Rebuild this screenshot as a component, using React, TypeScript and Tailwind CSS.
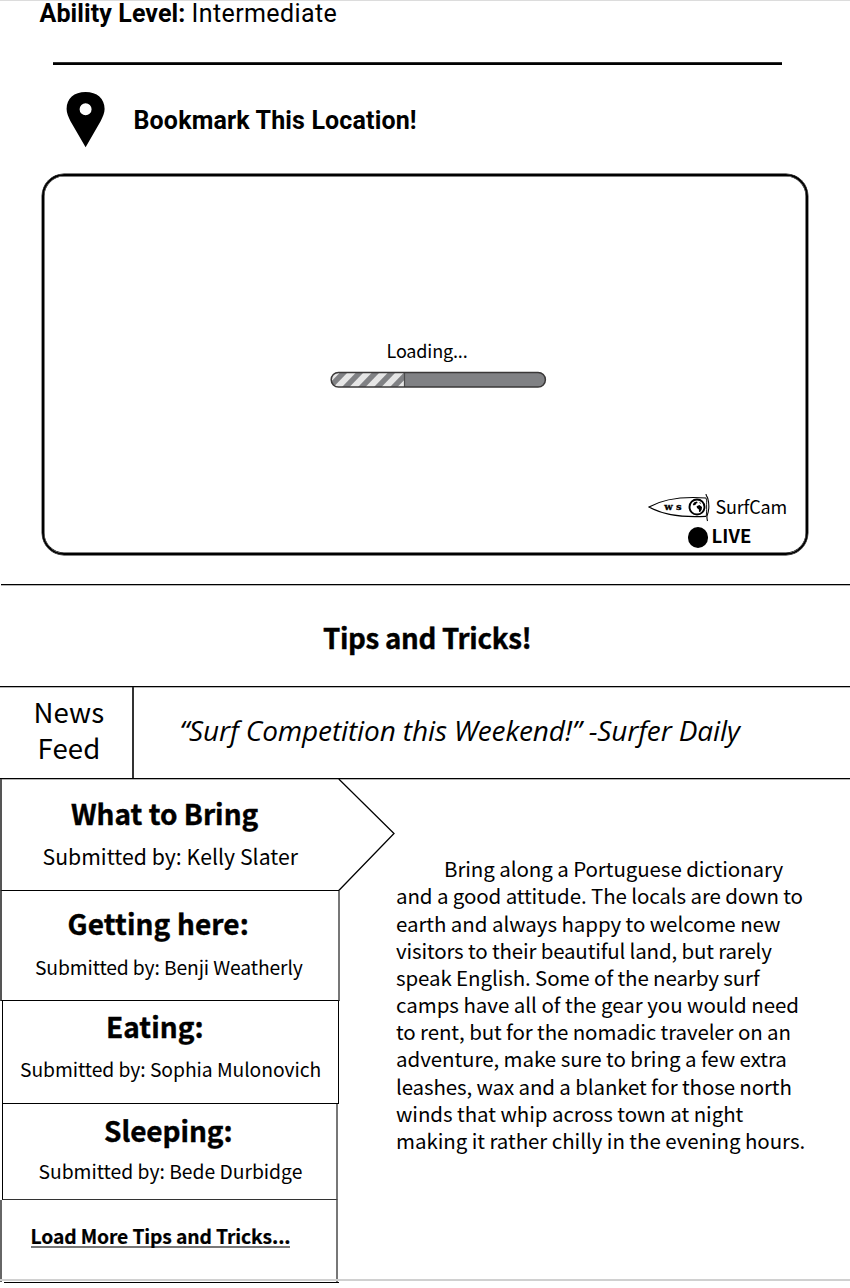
import type { ReactNode } from 'react';

type Tip = { title: string; author: string; item: string; titleClass: string; authorClass: string; active?: boolean };

const tips: Tip[] = [
  {
    title: 'What to Bring',
    author: 'Kelly Slater',
    item: 'relative h-[112px] w-[339px] border-b border-l-2 border-b-black border-l-[#555] pt-[16px]',
    titleClass: 'pl-[69px]',
    authorClass: 'mt-[10px] pl-[40.5px] text-[21.2px] leading-[30px] tracking-[0.04px]',
    active: true,
  },
  {
    title: 'Getting here:',
    author: 'Benji Weatherly',
    item: 'h-[110px] w-[340px] border-b border-l-2 border-r-2 border-b-black border-l-[#555] border-r-[#777] pt-[14px]',
    titleClass: 'pl-[65.5px] tracking-[0.12px]',
    authorClass: 'mt-[12px] pl-[33px] text-[19.3px] leading-[28px] tracking-[-0.12px]',
  },
  {
    title: 'Eating:',
    author: 'Sophia Mulonovich',
    item: 'ml-[2px] h-[103px] w-[337px] border-b border-l border-r border-black pt-[7px]',
    titleClass: 'pl-[103px] tracking-[0.05px]',
    authorClass: 'mt-[11px] pl-[17px] text-[19.3px] leading-[28px] tracking-[-0.05px]',
  },
  {
    title: 'Sleeping:',
    author: 'Bede Durbidge',
    item: 'ml-[2px] h-[96px] w-[336px] border-b border-l border-r-2 border-b-[#333] border-l-black border-r-[#777] pt-[8px]',
    titleClass: 'pl-[101px] tracking-[-0.067px]',
    authorClass: 'mt-[9px] pl-[35.5px] text-[19.3px] leading-[28px]',
  },
];

const story: [string, string][] = [
  ['Bring along a Portuguese dictionary', 'pl-[48px] tracking-[-0.08px]'],
  ['and a good attitude. The locals are down to', 'tracking-[-0.11px]'],
  ['earth and always happy to welcome new', 'tracking-[-0.07px]'],
  ['visitors to their beautiful land, but rarely', 'tracking-[-0.165px]'],
  ['speak English. Some of the nearby surf', 'tracking-[-0.11px]'],
  ['camps have all of the gear you would need', 'tracking-[-0.035px]'],
  ['to rent, but for the nomadic traveler on an', 'tracking-[-0.117px]'],
  ['adventure, make sure to bring a few extra', 'tracking-[-0.06px]'],
  ['leashes, wax and a blanket for those north', 'tracking-[-0.13px]'],
  ['winds that whip across town at night', 'tracking-[-0.07px]'],
  ['making it rather chilly in the evening hours.', 'tracking-[-0.06px]'],
];

function MapPin() {
  return (
    <svg className="mt-[27px] ml-[66px] h-[56px] w-[39px] shrink-0" viewBox="0 0 39 56">
      <path
        fillRule="evenodd"
        d="M19.6 0C8 0 .6 6.5 .6 17C.6 21 2.4 25 4.5 29.2L19.6 55.2L34.6 29.2C36.8 25 38.6 21 38.6 17C38.6 6.5 31 0 19.6 0ZM19.6 11.2a6 6 0 1 1 0 12a6 6 0 1 1 0-12Z"
      />
    </svg>
  );
}

function SurfboardLogo() {
  return (
    <svg className="h-[36px] w-[70px]" viewBox="0 0 70 36" fill="none" stroke="#000">
      <path strokeWidth="1.2" d="M61 10C40 8.5 19 10.5 4 19C19 27.5 40 29.5 61 28.3" />
      <path strokeWidth="1.1" d="M61 6C61.2 8.3 62.2 8.5 62.8 10.5C64.3 16 64.3 22 62 28C61.7 29.5 62 31 62.5 33" />
      <path strokeWidth="0.9" d="M61 10C62.2 13 61.4 15 61.6 19C61.8 23 61.4 25 61.3 28.3" />
      <circle cx="52" cy="19" r="7.5" strokeWidth="1.9" />
      <path
        fill="#000"
        stroke="none"
        d="M47.8 16.2L49.3 14.2L52 13.4L52.6 14.9L51.2 15.4L50.6 16.8L48.6 17.6ZM51.6 18.2L54.4 17L57 19L56.7 21.5L55.4 23.8L54 23.9L53.9 21.6L52 20ZM54 14L55.9 15L55.3 16Z"
      />
      <g fill="#000" stroke="#000" strokeWidth="0.3" fontFamily="'DejaVu Serif', serif" fontWeight="bold" fontSize="10">
        <text x="19.3" y="22.4" textLength="8.5" lengthAdjust="spacingAndGlyphs">w</text>
        <text x="31" y="22.4" textLength="5.6" lengthAdjust="spacingAndGlyphs">s</text>
      </g>
    </svg>
  );
}

function ProgressBar() {
  return (
    <svg className="mt-[9px] ml-[285px] block h-[17px] w-[217px]" viewBox="0 0 217 17">
      <defs>
        <clipPath id="filled">
          <path d="M8.5 1H74.5V16H8.5A7.5 7.5 0 0 1 8.5 1Z" />
        </clipPath>
      </defs>
      <rect x="1.2" y="1.4" width="214.2" height="14.7" rx="7.35" fill="#808184" />
      <g clipPath="url(#filled)" fill="#e6e6e6">
        {[-13, 3, 19, 35, 51, 67].map((x) => (
          <path key={x} d={`M${x} 16.5L${x + 15} 1H${x + 23.5}L${x + 8.5} 16.5Z`} />
        ))}
      </g>
      <path d="M74.5 1V16" stroke="#4d4d4d" strokeWidth="1.2" />
      <rect x="1.2" y="1.4" width="214.2" height="14.7" rx="7.35" fill="none" stroke="#3a3838" strokeWidth="1.5" />
    </svg>
  );
}

function TipItem({ tip }: { tip: Tip }) {
  return (
    <li className={tip.item}>
      <h3 className={`text-[28px] leading-[36px] font-bold [-webkit-text-stroke:0.4px_#000] ${tip.titleClass}`}>{tip.title}</h3>
      <p className={tip.authorClass}>Submitted by: {tip.author}</p>
      {tip.active && (
        <svg className="absolute top-0 left-[336px] h-[112px] w-[58px]" viewBox="0 0 58 112" fill="none" stroke="#000" strokeWidth="1.3">
          <path d="M0.8 0L56 54.5L0.8 111.5" />
        </svg>
      )}
    </li>
  );
}

function Band({ className, children }: { className: string; children?: ReactNode }) {
  return <div className={`border-b border-black shadow-[0_1px_0_#b5b5b5] ${className}`}>{children}</div>;
}

export default function App() {
  return (
    <main className="relative h-[1288px] w-[850px] overflow-hidden border-t border-[#dcdcdc] bg-white font-['Noto_Sans_CJK_SC',sans-serif] whitespace-nowrap text-black">
      <section className="h-[584px]">
        <p className="flex h-[61px] pl-[39.5px] font-['Roboto',sans-serif] text-[25px] leading-[26px]">
          <span className="w-[152px] font-bold tracking-[0.1px]">Ability Level:</span>
          <span className="tracking-[0.396px]">Intermediate</span>
        </p>
        <div className="ml-[53px] h-[3px] w-[729px] border-t border-[#333] bg-black" />
        <div className="flex h-[109px]">
          <MapPin />
          <h2 className="mt-[40px] ml-[28.5px] font-['Roboto',sans-serif] text-[25px] leading-[32px] font-bold tracking-[0.15px]">
            Bookmark This Location!
          </h2>
        </div>
        <div className="ml-[42px] h-[381px] w-[766px] rounded-[22px] border-2 border-black p-px shadow-[0_0_0_0.4px_#000,inset_0_0_0_0.5px_#000]">
          <p className="mt-[161px] pl-[341.5px] text-[18px] leading-[24px] tracking-[-0.15px]">Loading...</p>
          <ProgressBar />
          <div className="mt-[100px] ml-[600px] flex">
            <SurfboardLogo />
            <span className="pt-[6px] pl-[0.5px] text-[18px] leading-[24px] tracking-[-0.2px]">SurfCam</span>
          </div>
          <div className="-mt-[1px] ml-[642.5px] flex items-center">
            <span className="mt-[4px] size-[20.5px] rounded-full bg-black" />
            <span className="pl-[3.5px] text-[18.5px] leading-[24px] font-bold tracking-[0.08px]">LIVE</span>
          </div>
        </div>
      </section>

      <Band className="-mt-px ml-px h-0" />
      <Band className="h-[102px] pt-[32px]">
        <h1 className="pl-[323px] text-[27.7px] leading-[41px] font-bold tracking-[-0.3px] [-webkit-text-stroke:0.4px_#000]">
          Tips and Tricks!
        </h1>
      </Band>
      <Band className="flex h-[92px]">
        <div className="w-[134px] border-r-2 border-[#333] pt-[6px] text-[27.6px] leading-[36px] tracking-[0.1px]">
          <p className="pl-[33.5px]">News</p>
          <p className="pl-[37.5px]">Feed</p>
        </div>
        <p className="pt-[23px] pl-[45.5px] font-['Open_Sans',sans-serif] text-[28px] leading-[40px] tracking-[-0.12px] italic">
          “Surf Competition this Weekend!” -Surfer Daily
        </p>
      </Band>

      <section className="flex">
        <div className="w-[396px]">
          <ul>
            {tips.map((tip) => (
              <TipItem key={tip.title} tip={tip} />
            ))}
          </ul>
          <div className="h-[82px] w-[338px] border-r-2 border-l-2 border-r-[#777] border-l-[#666] pt-[22px] pl-[28.5px]">
            <a className="inline-block h-[25.5px] border-b-2 border-[#777] text-[19.3px] leading-[28px] font-bold tracking-[-0.12px] [-webkit-text-stroke:0.2px_#000]">
              Load More Tips and Tricks...
            </a>
          </div>
          <div className="ml-[4px] h-px w-[335px] bg-black" />
        </div>
        <div className="pt-[76.2px] text-[20.5px] leading-[27.17px]">
          {story.map(([line, spacing]) => (
            <p key={line} className={spacing}>
              {line}
            </p>
          ))}
        </div>
      </section>
      <div className="absolute top-[1278px] left-0 h-[2px] w-full bg-[#d0d0d0]" />
    </main>
  );
}
